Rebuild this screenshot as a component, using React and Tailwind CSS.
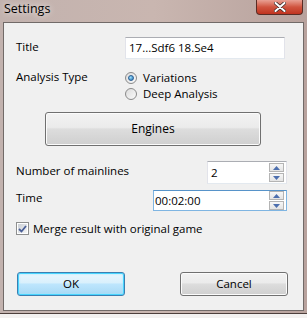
const font = { fontFamily: '"Open Sans", "Noto Sans", sans-serif' };

const Spinner = () => (
  <div className="flex flex-col gap-[1px] mr-[2px]">
    <div className="w-[15px] h-[9px] border border-[#b4b4b4] bg-gradient-to-b from-[#f7f7f7] to-[#e4e4e4] flex items-center justify-center">
      <svg width="7" height="4" viewBox="0 0 7 4"><path d="M0 4 L3.5 0 L7 4 Z" fill="#4d6fae" /></svg>
    </div>
    <div className="w-[15px] h-[9px] border border-[#b4b4b4] bg-gradient-to-b from-[#f7f7f7] to-[#e4e4e4] flex items-center justify-center">
      <svg width="7" height="4" viewBox="0 0 7 4"><path d="M0 0 L3.5 4 L7 0 Z" fill="#4d6fae" /></svg>
    </div>
  </div>
);

const Radio = ({ checked, label }) => (
  <div className="flex items-center h-[16px]">
    <div className="w-[12px] h-[12px] rounded-full border border-[#8a8a8a] bg-gradient-to-br from-[#dcdcdc] to-[#fafafa] flex items-center justify-center">
      {checked && (
        <div className="w-[6px] h-[6px] rounded-full bg-[radial-gradient(circle_at_35%_35%,#9ee1fb,#1f6fb5)] border border-[#2b5f94]" />
      )}
    </div>
    <span className="ml-[6px]">{label}</span>
  </div>
);

export default function App() {
  return (
    <div className="w-[307px] h-[318px] bg-[#f3f1f0] overflow-hidden text-[11.5px] text-black" style={font}>
      <div className="w-[307px] h-[314px] bg-gradient-to-r from-[#c2b2ae] via-[#c9b6b0] to-[#b8a29d] relative border-b border-[#4d3f3c] flex flex-col">
        {/* title bar */}
        <div className="h-[22px] flex items-center pl-[4px] pb-[3px]">
          <span className="text-[12.5px] [text-shadow:0_0_6px_#ffffff]">Settings</span>
        </div>
        <div className="absolute right-[4px] top-0 w-[47px] h-[15px] rounded-b-[4px] border border-t-0 border-[#5a2c25] bg-gradient-to-b from-[#e8a093] via-[#d0543f] to-[#c0331f] flex items-center justify-center">
          <svg width="12" height="10" viewBox="0 0 12 10">
            <path d="M1.5 1 L10.5 9 M10.5 1 L1.5 9" stroke="#3a2a28" strokeWidth="3.5" strokeLinecap="round" />
            <path d="M1.5 1 L10.5 9 M10.5 1 L1.5 9" stroke="#ffffff" strokeWidth="2" strokeLinecap="round" />
          </svg>
        </div>

        {/* client area */}
        <div className="mx-[3px] h-[289px] border border-[#716a68] bg-[#f0f0f0] flex flex-col pl-[12px]">
          <div className="flex items-center mt-[14px] h-[22px]">
            <span className="w-[109px] -mt-[3px]">Title</span>
            <div className="w-[160px] h-[22px] bg-white border border-[#abadb3] border-b-[#e3e9ef] border-x-[#e2e3ea] flex items-center pl-[3px]">
              17...Sdf6 18.Se4
            </div>
          </div>

          <div className="flex mt-[11px]">
            <span className="w-[109px] mt-[-2px]">Analysis Type</span>
            <div className="flex flex-col">
              <Radio checked label="Variations" />
              <Radio label="Deep Analysis" />
            </div>
          </div>

          <button className="ml-[29px] mt-[10px] w-[216px] h-[34px] rounded-[3px] border border-[#707070] bg-[linear-gradient(#f2f2f2,#ebebeb_45%,#dddddd_50%,#cfcfcf)] shadow-[inset_0_0_0_1px_#fbfbfb] text-[12px]">
            Engines
          </button>

          <div className="flex items-center mt-[15px] h-[23px]">
            <span className="w-[191px] -mt-[4px]">Number of mainlines</span>
            <div className="w-[80px] h-[23px] bg-white border border-[#abadb3] border-b-[#e3e9ef] border-x-[#e2e3ea] flex items-center justify-between pl-[3px]">
              <span>2</span>
              <Spinner />
            </div>
          </div>

          <div className="flex items-center mt-[6px] h-[21px]">
            <span className="w-[137px] -mt-[6px]">Time</span>
            <div className="w-[134px] h-[21px] bg-white border border-[#7fb5e2] border-t-[#5793c9] flex items-center justify-between pl-[1px]">
              <span>00:02:00</span>
              <Spinner />
            </div>
          </div>

          <div className="flex items-center mt-[11px] h-[13px]">
            <div className="w-[13px] h-[13px] border border-[#8e8f8f] bg-white p-[1px]">
              <div className="w-full h-full bg-gradient-to-br from-[#cbcfd5] to-[#f6f6f6] flex items-center justify-center">
                <svg width="9" height="8" viewBox="0 0 9 8">
                  <path d="M1 4 L3.5 6.5 L8 1" stroke="#4a5f97" strokeWidth="1.8" fill="none" />
                </svg>
              </div>
            </div>
            <span className="ml-[4px]">Merge result with original game</span>
          </div>

          <div className="flex mt-[37px]">
            <button className="ml-[1px] w-[108px] h-[24px] rounded-[3px] border border-[#3c7fb1] bg-[linear-gradient(#eaf6fd,#d9f0fc_45%,#bee6fd_50%,#a7d9f5)] shadow-[inset_0_0_0_1px_#48d4fe,inset_0_0_2px_1px_#9be6fe]">
              OK
            </button>
            <button className="ml-[55px] w-[108px] h-[24px] rounded-[3px] border border-[#707070] bg-[linear-gradient(#f2f2f2,#ebebeb_45%,#dddddd_50%,#cfcfcf)] shadow-[inset_0_0_0_1px_#fbfbfb]">
              Cancel
            </button>
          </div>
        </div>
      </div>
    </div>
  );
}
